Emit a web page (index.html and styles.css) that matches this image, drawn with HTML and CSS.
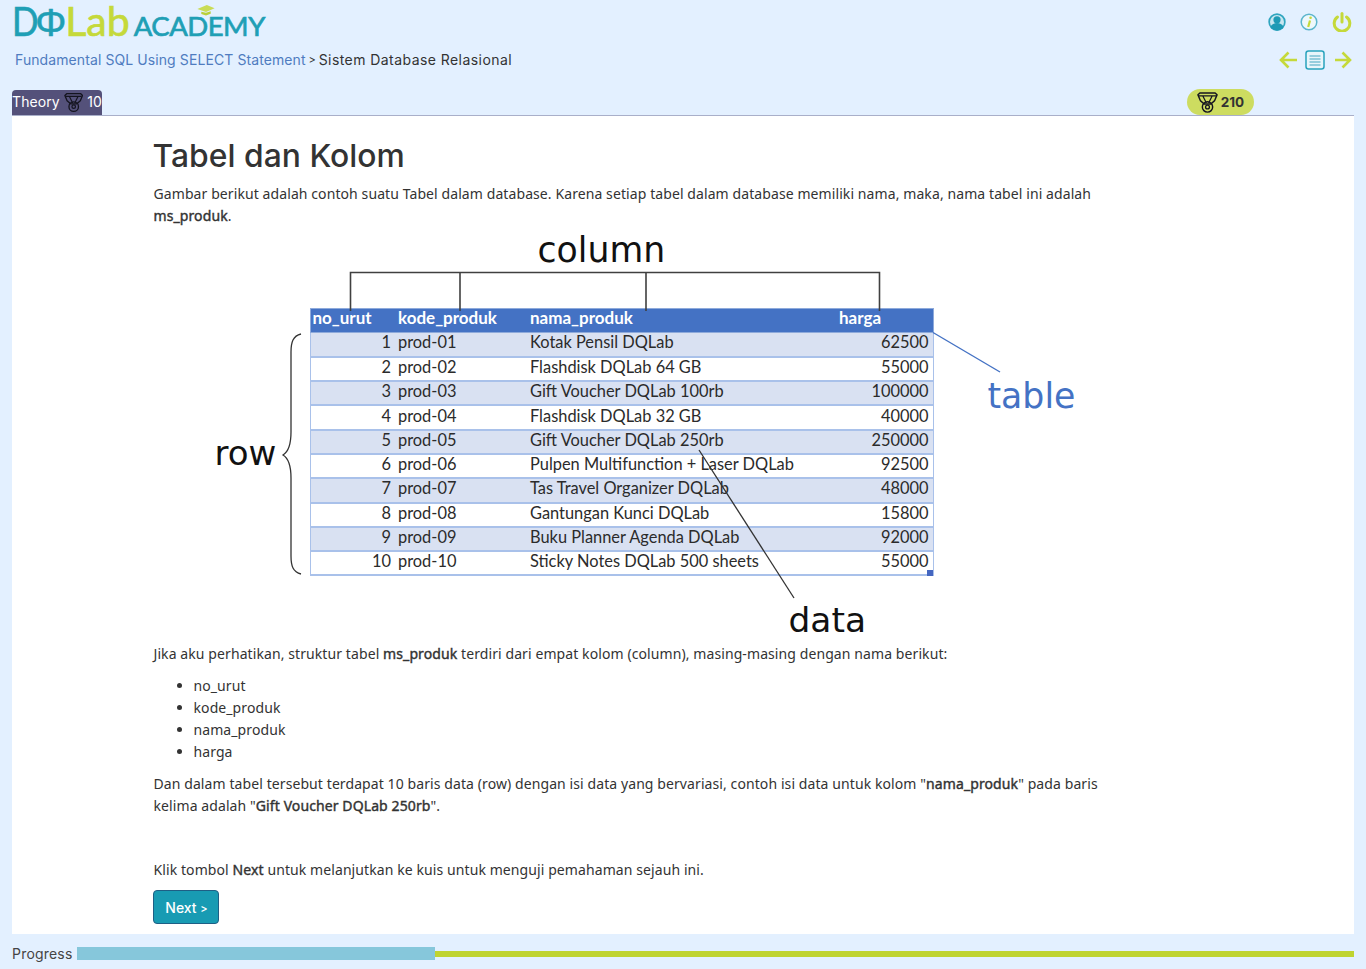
FILE: index.html
```html
<!DOCTYPE html>
<html lang="id">
<head>
<meta charset="utf-8">
<title>Tabel dan Kolom</title>
<link rel="stylesheet" href="styles.css">
</head>
<body>
<svg class="defs" width="0" height="0" aria-hidden="true">
  <symbol id="medal" viewBox="0 0 22 22">
    <path d="M1 3 3 1H19L21 3 18.500 9 14.500 12.500H7.500L3.500 9z" fill="none" stroke="currentColor" stroke-width="1.500" stroke-linejoin="round"/>
    <path d="M2 4H20M6 4 9.800 11.500M16 4 12.200 11.500" fill="none" stroke="currentColor" stroke-width="1.300"/>
    <circle cx="11" cy="15.700" r="5.400" fill="none" stroke="currentColor" stroke-width="1.500"/>
    <circle cx="11" cy="15.700" r="2" fill="none" stroke="currentColor" stroke-width="1.400"/>
  </symbol>
</svg>
<header class="top">
  <div class="row-logo">
    <div class="logo">
      <span class="logo-d">D</span><span class="logo-q">Φ</span><span class="logo-lab">Lab</span>
      <span class="logo-academy">ACADEMY</span>
      <svg class="logo-cap" viewBox="0 0 22 14" aria-hidden="true">
        <path d="M0 5 12 0l10 4-11 5z" fill="#c9dc55"/>
        <path d="M5 8.500v3l6 2 6-2.500v-3l-6 2z" fill="#b9cf3a"/>
      </svg>
    </div>
    <div class="tools">
      <svg class="tool" viewBox="0 0 18 18" aria-hidden="true"><circle cx="9" cy="9" r="8.700" fill="#2fa5bf"/><circle cx="9" cy="9" r="7" fill="#c8e6f0"/><circle cx="9" cy="6.800" r="3.600" fill="#1e9ab5"/><path d="M2.500 14c1.200-3 3.800-4 6.500-4s5.300 1 6.500 4A8.700 8.700 0 0 1 9 17.700 8.700 8.700 0 0 1 2.500 14z" fill="#1e9ab5"/></svg>
      <svg class="tool" viewBox="0 0 18 18" aria-hidden="true"><circle cx="9" cy="9" r="7.800" fill="#eef8fb" stroke="#5bb5cc" stroke-width="1.500"/><path d="M10 7.500 8.200 14" fill="none" stroke="#c5d93a" stroke-width="2.200"/><circle cx="10.600" cy="4.700" r="1.300" fill="#c5d93a"/></svg>
      <svg class="tool tool-power" viewBox="0 0 20 20" aria-hidden="true"><path d="M5.500 5a7.800 7.800 0 1 0 9 0" fill="none" stroke="#c5d93a" stroke-width="3" stroke-linecap="round"/><path d="M10 1.500v8.500" fill="none" stroke="#c5d93a" stroke-width="3" stroke-linecap="round"/></svg>
    </div>
  </div>
  <div class="row-crumb">
    <p class="crumb"><a class="crumb-link">Fundamental SQL Using SELECT Statement</a> <span class="sep sep-crumb">&gt;</span> Sistem Database Relasional</p>
    <nav class="pager">
      <svg class="arrow" viewBox="0 0 18 18" aria-hidden="true"><path d="M18 9H3M9.500 1.500 2 9l7.500 7.500" fill="none" stroke="#c5d93a" stroke-width="2.600"/></svg>
      <svg class="list" viewBox="0 0 20 20" aria-hidden="true"><rect x="1" y="1" width="18" height="18" rx="2.500" fill="#e9f5fa" stroke="#2aa3bd" stroke-width="1.500"/><path d="M4.500 6h11M4.500 9h11M4.500 12h11M4.500 15h11" stroke="#7cc0d4" stroke-width="1.400"/></svg>
      <svg class="arrow" viewBox="0 0 18 18" aria-hidden="true"><path d="M1 9h15M8.500 1.500 16 9l-7.500 7.500" fill="none" stroke="#c5d93a" stroke-width="2.600"/></svg>
    </nav>
  </div>
  <div class="row-tabs">
    <div class="tab">Theory <svg class="medal medal-tab"><use href="#medal"/></svg> 10</div>
    <div class="points"><svg class="medal"><use href="#medal"/></svg> 210</div>
  </div>
</header>

<main class="sheet">
  <article class="content">
    <h1 class="title">Tabel dan Kolom</h1>
    <p class="para">Gambar berikut adalah contoh suatu Tabel dalam database. Karena setiap tabel dalam database memiliki nama, maka, nama tabel ini adalah <b>ms_produk</b>.</p>

    <figure class="diagram">
      <table class="data">
        <colgroup><col class="c1"><col class="c2"><col class="c3"><col class="c4"></colgroup>
        <thead><tr><th>no_urut</th><th class="th-kode">kode_produk</th><th class="th-nama">nama_produk</th><th class="th-harga">harga</th></tr></thead>
        <tbody>
          <tr><td class="num">1</td><td>prod-01</td><td>Kotak Pensil DQLab</td><td class="num">62500</td></tr>
          <tr><td class="num">2</td><td>prod-02</td><td>Flashdisk DQLab 64 GB</td><td class="num">55000</td></tr>
          <tr><td class="num">3</td><td>prod-03</td><td>Gift Voucher DQLab 100rb</td><td class="num">100000</td></tr>
          <tr><td class="num">4</td><td>prod-04</td><td>Flashdisk DQLab 32 GB</td><td class="num">40000</td></tr>
          <tr><td class="num">5</td><td>prod-05</td><td>Gift Voucher DQLab 250rb</td><td class="num">250000</td></tr>
          <tr><td class="num">6</td><td>prod-06</td><td>Pulpen Multifunction + Laser DQLab</td><td class="num">92500</td></tr>
          <tr><td class="num">7</td><td>prod-07</td><td>Tas Travel Organizer DQLab</td><td class="num">48000</td></tr>
          <tr><td class="num">8</td><td>prod-08</td><td>Gantungan Kunci DQLab</td><td class="num">15800</td></tr>
          <tr><td class="num">9</td><td>prod-09</td><td>Buku Planner Agenda DQLab</td><td class="num">92000</td></tr>
          <tr><td class="num">10</td><td>prod-10</td><td>Sticky Notes DQLab 500 sheets</td><td class="num">55000</td></tr>
        </tbody>
      </table>
      <svg class="marks" viewBox="154 230 960 410" aria-hidden="true">
        <path d="M350.500 311V272.500H879.500V311M460 272.500V311M646 272.500V311" fill="none" stroke="#404040" stroke-width="1.600"/>
        <path d="M933 332.500 1000 372" fill="none" stroke="#4472c4" stroke-width="1.400"/>
        <path d="M699 450 794 598" fill="none" stroke="#333" stroke-width="1.300"/>
        <path d="M301 334C293 336 291 342 291 352V432C291 446 288 452 283 455 288 458 291 464 291 478V556C291 566 293 572 301 574" fill="none" stroke="#333" stroke-width="1.300"/>
        <rect x="927" y="570" width="6" height="6" fill="#4466c0"/>
      </svg>
      <span class="label label-column">column</span>
      <span class="label label-row">row</span>
      <span class="label label-table">table</span>
      <span class="label label-data">data</span>
    </figure>

    <p class="para">Jika aku perhatikan, struktur tabel <b>ms_produk</b> terdiri dari empat kolom (column), masing-masing dengan nama berikut:</p>
    <ul class="cols">
      <li>no_urut</li>
      <li>kode_produk</li>
      <li>nama_produk</li>
      <li>harga</li>
    </ul>
    <p class="para">Dan dalam tabel tersebut terdapat 10 baris data (row) dengan isi data yang bervariasi, contoh isi data untuk kolom "<b>nama_produk</b>" pada baris kelima adalah "<b>Gift Voucher DQLab 250rb</b>".</p>
    <p class="para para-next">Klik tombol <b>Next</b> untuk melanjutkan ke kuis untuk menguji pemahaman sejauh ini.</p>
    <button class="next" type="button">Next <span class="sep">&gt;</span></button>
  </article>
</main>

<footer class="progress">
  <span class="progress-label">Progress</span>
  <div class="track"><div class="fill" style="width:28%"></div></div>
</footer>
</body>
</html>
```
FILE: styles.css
```css
* { box-sizing: border-box; }
html, body { margin: 0; height: 100%; }
body {
  background: #e3f0ff;
  color: #333;
  font-family: "Noto Sans", sans-serif;
  font-size: 14px;
  line-height: 22px;
  letter-spacing: .09px;
  overflow: hidden;
}
.defs { position: absolute; }
.sep { font-size: 11px; letter-spacing: 0; vertical-align: 1px; }
.sep-crumb { margin: 0 -1.500px; }

/* header */
.top { padding: 0 12px; height: 115px; display: flex; flex-direction: column; }
.row-logo { display: flex; justify-content: space-between; height: 44px; }
.logo { position: relative; display: flex; align-items: baseline; padding-left: 1px; height: 42px; font-family: "Lato", sans-serif; color: #1f9fb5; letter-spacing: 0; white-space: nowrap; }
.logo-d { display: inline-block; transform: scaleX(.85); transform-origin: left; margin-right: -10px; margin-left: -1px; font-size: 41px; line-height: 42px; -webkit-text-stroke: .7px currentColor; }
.logo-q { margin: 0 -1px 0 2px; font-size: 39px; line-height: 42px; font-family: "Liberation Sans", sans-serif; -webkit-text-stroke: .5px currentColor; }
.logo-lab { font-size: 41px; line-height: 42px; color: #c5d93a; -webkit-text-stroke: .7px currentColor; }
.logo-academy { margin-left: 4px; font-size: 27.500px; letter-spacing: -.5px; -webkit-text-stroke: .7px currentColor; }
.logo-cap { position: absolute; left: 183px; top: 5px; width: 22px; height: 11px; }
.tools { display: flex; align-items: center; gap: 14px; padding: 0 2px 0 0; height: 44px; }
.tool { width: 18px; height: 18px; }
.tool-power { width: 20px; height: 20px; }
.row-crumb { display: flex; justify-content: space-between; align-items: center; height: 32px; padding-left: 3px; }
.crumb { margin: 0; font-family: "Inter", sans-serif; font-size: 14px; letter-spacing: .44px; color: #333; }
.crumb-link { color: #4f7cc0; letter-spacing: .09px; }
.pager { display: flex; align-items: center; gap: 9px; padding-right: 2px; }
.arrow { width: 18px; height: 18px; }
.arrow:first-child { margin-right: -1px; }
.list { width: 20px; height: 20px; }
.row-tabs { display: flex; justify-content: space-between; align-items: flex-end; margin-top: 12px; height: 27px; padding-right: 100px; }
.tab { display: flex; align-items: center; gap: 3px; height: 25px; width: 90px; padding-bottom: 1px; background: #54517a; color: #fff; border-radius: 4px 4px 0 0; font-family: "Inter", sans-serif; font-size: 14px; letter-spacing: .1px; white-space: nowrap; }
.points { display: flex; align-items: center; justify-content: center; gap: 3px; width: 67px; height: 26px; background: #cddc60; border-radius: 13px; font-family: "Inter", sans-serif; font-weight: 700; font-size: 13.500px; letter-spacing: 0; color: #333; }
.medal { width: 21px; height: 21px; color: #14141f; }
.medal-tab { margin: 0 1px; }

/* sheet */
.sheet { height: 819px; margin: 0 12px; background: #fff; border-top: 1px solid #a9afc9; }
.content { width: 958px; margin-left: 141.500px; padding-top: 23px; }
.title { margin: 0 0 10px -1px; font-family: "Inter", sans-serif; font-weight: 500; font-size: 31.800px; letter-spacing: .03px; line-height: 34px; color: #333; }
.para { margin: 0 0 10px; }
b { font-weight: 400; letter-spacing: .1px; -webkit-text-stroke: .4px currentColor; }

/* diagram */
.diagram { position: relative; height: 413px; margin: -7px 0 0; width: 960px; }
.data { position: absolute; left: 156px; top: 78px; width: 623px; height: 267px; border-collapse: collapse; table-layout: fixed; font-family: "Lato", sans-serif; font-size: 16.400px; line-height: 18px; letter-spacing: 0; color: #2b2b2b; background: #fff; }
.c1 { width: 83px; } .c2 { width: 132px; } .c3 { width: 310px; } .c4 { width: 98px; }
.data th { height: 24px; padding: 0 0 5px 2px; background: #4472c4; color: #fff; text-align: left; font-size: 17px; font-weight: 700; border: 1px solid #8eaadb; border-width: 1px 0; }
.data th:first-child { border-left: 1px solid #8eaadb; }
.data th:last-child { border-right: 1px solid #8eaadb; }
.data .th-kode { padding-left: 5px; }
.data .th-nama { padding-left: 5px; }
.data .th-harga { padding-left: 4px; }
.data td { height: 24.300px; padding: 0 0 4px 5px; border-top: 1px solid #a9c1ea; border-bottom: 2px solid #a9c1ea; white-space: nowrap; }
.data td:first-child { border-left: 1px solid #a9c1ea; }
.data td:last-child { border-right: 1px solid #a9c1ea; }
.data tbody tr:nth-child(odd) td { background: #d9e1f2; }
.data td.num { text-align: right; padding: 0 4px 4px 0; }
.data td.num:first-child { padding-right: 2px; }
.marks { position: absolute; left: 0; top: 0; width: 960px; height: 410px; overflow: visible; }
.label { position: absolute; font-family: "DejaVu Sans", sans-serif; font-size: 34.700px; line-height: 40px; letter-spacing: 0; color: #111; }
.label-column { left: 384px; top: 0; }
.label-row { left: 61px; top: 203px; font-size: 34px; }
.label-table { left: 834px; top: 146px; color: #4472c4; }
.label-data { left: 635px; top: 370px; font-size: 34.400px; }

/* list and foot */
.cols { margin: 0 0 10px; padding: 0 0 0 40px; }
.para-next { margin: 42px 0 9px; }
.next { display: block; width: 66px; height: 34px; margin-left: -1px; padding: 0 0 0 2px; background: #189bb3; color: #fff; border: 1px solid #1e5f85; border-radius: 4px; font-family: "Inter", sans-serif; font-size: 14px; font-weight: 500; }

.progress { display: flex; align-items: center; height: 35px; padding: 5px 12px 0; }
.progress-label { width: 65px; font-family: "Inter", sans-serif; font-size: 14px; letter-spacing: .2px; color: #444; }
.track { flex: 1; height: 6px; background: #bfd431; position: relative; }
.fill { position: absolute; left: 0; top: -4px; height: 13px; background: #86c7db; }
```
